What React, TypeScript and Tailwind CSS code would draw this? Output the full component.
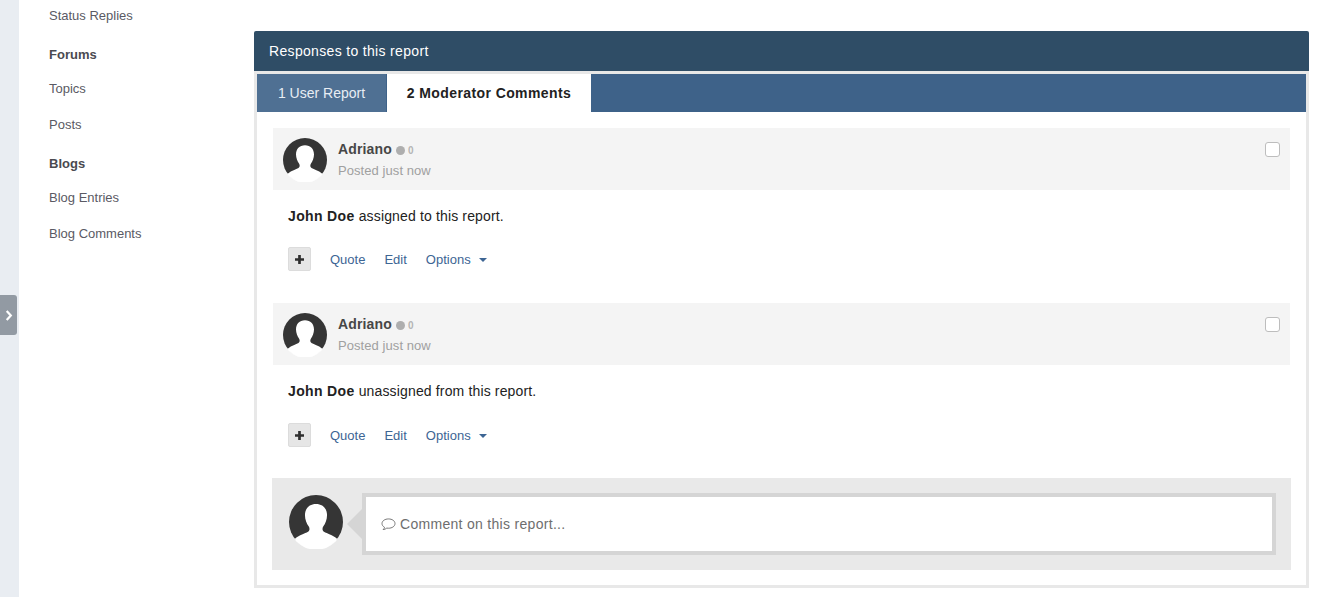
import React from 'react';

const Avatar = ({ className }: { className: string }) => (
    <svg viewBox="0 0 44 44" className={className}>
        <defs>
            <clipPath id="avatar-clip">
                <circle cx="22" cy="22" r="22.6" />
            </clipPath>
        </defs>
        <circle cx="22" cy="22" r="22" fill="#353535" />
        <path
            clipPath="url(#avatar-clip)"
            d="M22 7.300c-5.500 0-9 3.700-9 9.200 0 3.500 1.500 7 3 9 1 1.500 1 3.500-.5 4.500-2.500 1.500-7 2.500-10.500 5.500V44h34v-8.500c-3.500-3-8-4-10.500-5.500-1.500-1-1.500-3-.5-4.500 1.500-2 3-5.500 3-9 0-5.500-3.500-9.200-9-9.200z"
            fill="#ffffff"
        />
    </svg>
);

const SideLink = ({ label }: { label: string }) => (
    <a className="block h-9 leading-9 text-[13px] text-[#5a5a64]">{label}</a>
);

const SideHeading = ({ label }: { label: string }) => (
    <h4 className="h-[37px] pt-[12px] leading-[18px] text-[13px] font-bold text-[#4a4a50]">
        {label}
    </h4>
);

const Comment = ({ action, actionsGap }: { action: string; actionsGap: string }) => (
    <article>
        <div className="flex h-[62px] bg-[#f4f4f4] px-[10px]">
            <Avatar className="mt-[10px] h-[44px] w-[44px]" />
            <div className="ml-[11px] flex-1 pt-[11px]">
                <div className="flex h-[20px] items-center">
                    <strong className="text-[14px] font-bold tracking-[0.15px] text-[#474747]">Adriano</strong>
                    <span className="ml-[4px] mt-[2px] h-[9px] w-[9px] rounded-full bg-[#aeaeae]" />
                    <span className="ml-[3px] mt-[2px] text-[10px] font-bold text-[#b5b5b5]">0</span>
                </div>
                <div className="mt-[2px] text-[13px] leading-[20px] tracking-[0.07px] text-[#a0a0a0]">Posted just now</div>
            </div>
            <span className="mt-[14px] h-[15px] w-[15px] rounded-[3px] border border-[#bdbdbd] bg-white" />
        </div>
        <p className="mt-[16px] pl-[15px] text-[14px] leading-[20px] tracking-[0.15px] text-[#222222]">
            <strong className="font-bold tracking-[0.35px]">John Doe</strong> {action}
        </p>
        <div className={`${actionsGap} flex h-[24px] items-center pl-[15px] text-[13px] text-[#3d6594]`}>
            <span className="flex h-[24px] w-[23px] items-center justify-center rounded-[2px] border border-[#dcdcdc] bg-[#e6e6e6]">
                <svg viewBox="0 0 10 10" className="h-[9px] w-[9px]">
                    <path d="M3.500 0h3v3.500H10v3H6.500V10h-3V6.500H0v-3h3.500z" fill="#2f2f2f" />
                </svg>
            </span>
            <a className="ml-[19px] mt-[2px]">Quote</a>
            <a className="ml-[19px] mt-[2px]">Edit</a>
            <a className="ml-[19px] mt-[2px]">Options</a>
            <svg viewBox="0 0 8 4" className="ml-[8px] mt-[1px] h-[4px] w-[8px]">
                <path d="M0 0h8L4 4z" fill="#3d6594" />
            </svg>
        </div>
    </article>
);

export default function App() {
    return (
        <div className="relative flex h-[597px] overflow-hidden bg-white font-['Liberation_Sans',Arial,sans-serif]">
            <div className="w-[19px] shrink-0 bg-[#e9edf2]" />
            <button className="absolute left-0 top-[295px] flex h-[40px] w-[17px] items-center justify-center rounded-r-[3px] bg-[#929aa3]">
                <svg viewBox="0 0 8 12" className="h-[11px] w-[8px]">
                    <path d="M1.500 1l4.500 5-4.500 5" fill="none" stroke="#ffffff" strokeWidth="2.400" />
                </svg>
            </button>

            <aside className="mt-[-2px] w-[235px] shrink-0 pl-[30px]">
                <SideLink label="Status Replies" />
                <SideHeading label="Forums" />
                <SideLink label="Topics" />
                <SideLink label="Posts" />
                <SideHeading label="Blogs" />
                <SideLink label="Blog Entries" />
                <SideLink label="Blog Comments" />
            </aside>

            <main className="mt-[31px] w-[1055px] shrink-0 self-start">
                <h2 className="h-[40px] rounded-t-[2px] bg-[#2f4d66] pl-[15px] text-[14px] leading-[40px] tracking-[0.33px] text-white">
                    Responses to this report
                </h2>
                <div className="h-[517px] border-[3px] border-[#e8e8e8]">
                    <div className="flex h-[38px] bg-[#3e6289] text-[14px] leading-[38px]">
                        <div className="w-[130px] border-r border-[#3e6289] bg-[#4f7093] text-center text-[#e8edf3]">
                            1 User Report
                        </div>
                        <div className="w-[204px] bg-white text-center font-bold tracking-[0.4px] text-[#222222]">
                            2 Moderator Comments
                        </div>
                    </div>
                    <div className="px-[16px] pt-[16px]">
                        <Comment action="assigned to this report." actionsGap="mt-[21px]" />
                        <div className="h-[32px]" />
                        <Comment action="unassigned from this report." actionsGap="mt-[22px]" />
                    </div>
                    <div className="mx-[15px] mt-[31px] flex h-[92px] items-center bg-[#e9e9e9] pl-[17px]">
                        <Avatar className="mb-[4px] h-[54px] w-[54px]" />
                        <div className="ml-[4px] h-0 w-0 border-y-[15px] border-r-[15px] border-y-transparent border-r-[#d5d5d5]" />
                        <div className="flex h-[62px] w-[914px] items-center border-[4px] border-[#d5d5d5] bg-white pl-[15px] text-[14px] tracking-[0.3px] text-[#6e6e6e]">
                            <svg viewBox="0 0 16 14" className="mr-[4px] h-[13px] w-[15px]">
                                <path
                                    d="M8 1C4.100 1 1 3.100 1 6c0 1.700 1.100 3.100 2.700 4-.2.900-.7 1.800-1.500 2.500 1.500-.1 2.900-.7 3.900-1.600.6.100 1.200.1 1.900.1 3.900 0 7-2.100 7-5S11.900 1 8 1z"
                                    fill="none"
                                    stroke="#6e6e6e"
                                    strokeWidth="1"
                                />
                            </svg>
                            Comment on this report...
                        </div>
                    </div>
                </div>
            </main>
        </div>
    );
}
